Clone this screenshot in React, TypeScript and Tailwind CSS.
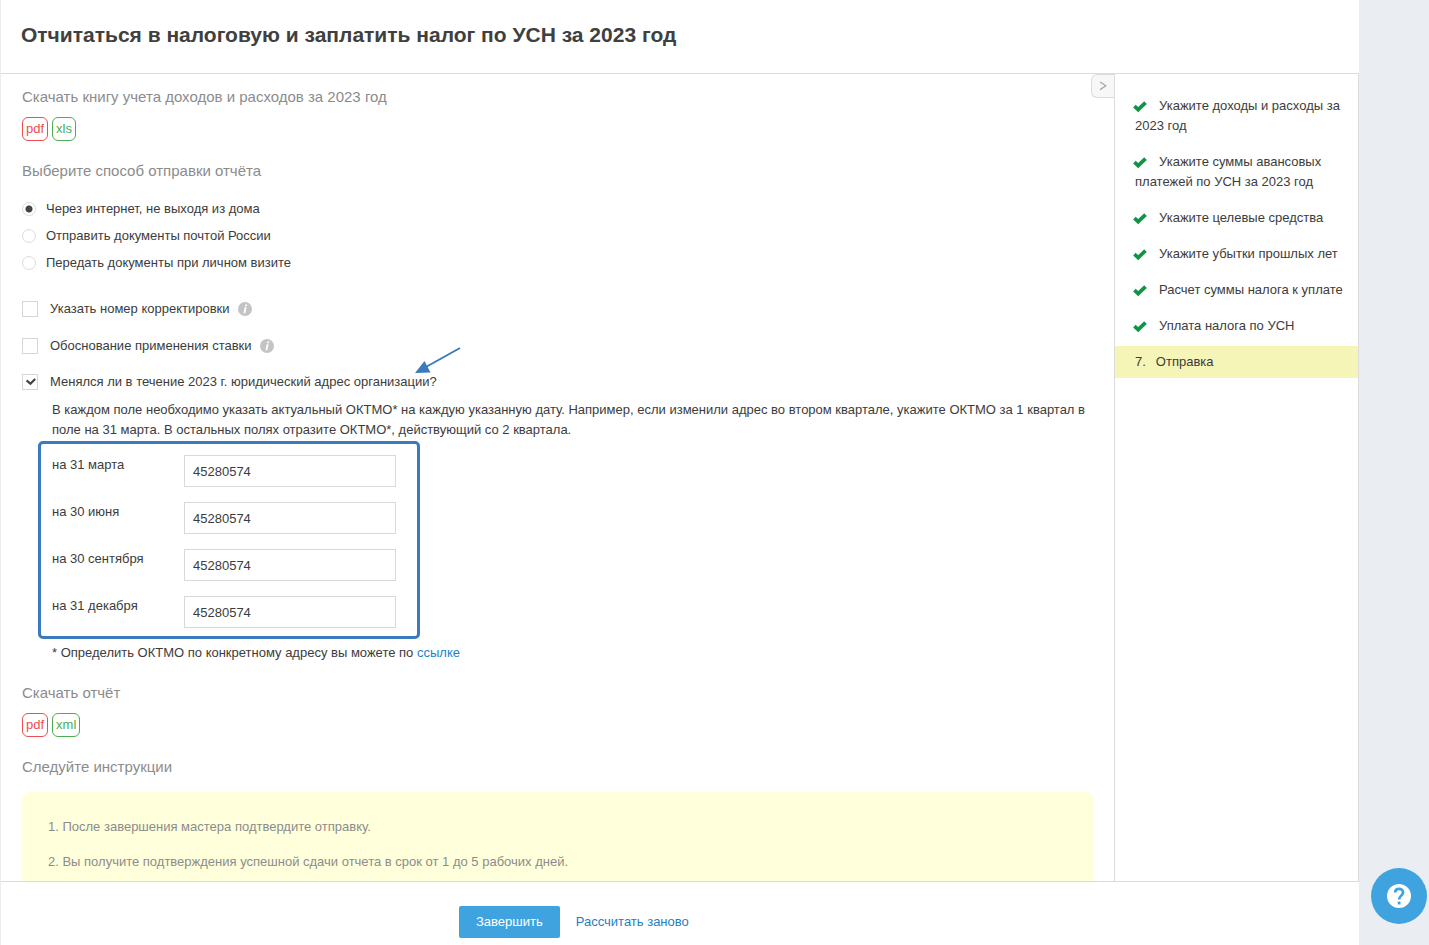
import { useState } from 'react';

type BadgeProps = {
  label: string;
  tone: 'red' | 'green';
};

const DELIVERY = [
  { id: 'online', label: 'Через интернет, не выходя из дома' },
  { id: 'post', label: 'Отправить документы почтой России' },
  { id: 'visit', label: 'Передать документы при личном визите' },
];

const DATES = [
  { id: 'q1', label: 'на 31 марта' },
  { id: 'q2', label: 'на 30 июня' },
  { id: 'q3', label: 'на 30 сентября' },
  { id: 'q4', label: 'на 31 декабря' },
];

const DONE_STEPS = [
  'Укажите доходы и расходы за 2023 год',
  'Укажите суммы авансовых платежей по УСН за 2023 год',
  'Укажите целевые средства',
  'Укажите убытки прошлых лет',
  'Расчет суммы налога к уплате',
  'Уплата налога по УСН',
];

function FileBadge({ label, tone }: BadgeProps) {
  const color = tone === 'red' ? 'border-[#ee4d55] text-[#ee4d55]' : 'border-[#4cae50] text-[#4cae50]';
  return (
    <a href="#" className={`flex h-6 items-center rounded-md border px-[3px] leading-5 ${color}`}>
      {label}
    </a>
  );
}

function SectionTitle({ children }: { children: string }) {
  return <h2 className="text-[15px] leading-5 text-[#8c8c8c]">{children}</h2>;
}

function InfoIcon() {
  return (
    <svg viewBox="0 0 14 14" className="mb-px ml-2 size-[14px]" aria-hidden="true">
      <circle cx="7" cy="7" r="7" fill="#c4c4c4" />
      <path d="M7.3 2.6h1.9l-.4 1.7H6.9zM6.7 5.2h1.9L7.3 11.2H5.4z" fill="#fff" />
    </svg>
  );
}

function StepCheck() {
  return (
    <svg viewBox="0 0 14 14" className="mr-3 -ml-0.5 inline-block size-[14px]" aria-hidden="true">
      <path d="M1.4 6.2 5.2 9.7 12.5 2.6" fill="none" stroke="#109547" strokeWidth="3.7" />
    </svg>
  );
}

type CheckRowProps = {
  id: string;
  label: string;
  info?: boolean;
  defaultChecked?: boolean;
};

function CheckRow({ id, label, info, defaultChecked }: CheckRowProps) {
  return (
    <div className="flex h-5 items-center">
      <span className="relative mr-3 size-4">
        <input
          id={id}
          type="checkbox"
          defaultChecked={defaultChecked}
          className="peer block size-4 appearance-none border border-[#d6d6d6] bg-white"
        />
        <svg
          viewBox="0 0 16 16"
          className="pointer-events-none absolute inset-0 hidden size-4 peer-checked:block"
          aria-hidden="true"
        >
          <path d="M4.6 6.4 8.4 9.8 13.2 5" fill="none" stroke="#444" strokeWidth="2.2" />
        </svg>
      </span>
      <label htmlFor={id}>{label}</label>
      {info && <InfoIcon />}
    </div>
  );
}

export default function App() {
  const [delivery, setDelivery] = useState('online');
  const [codes, setCodes] = useState<Record<string, string>>({
    q1: '45280574',
    q2: '45280574',
    q3: '45280574',
    q4: '45280574',
  });

  return (
    <div className="h-screen bg-[#eaeef2] pr-[70px] pl-px font-['Liberation_Sans',Arial,sans-serif] text-[13px] leading-5 text-[#3c3c3c]">
      <div className="flex h-full flex-col bg-white">
        <header className="border-b border-[#dcdcdc] px-5 pt-[21px] pb-6">
          <h1 className="text-[21px] leading-7 font-bold text-[#404040]">
            Отчитаться в налоговую и заплатить налог по УСН за 2023 год
          </h1>
        </header>

        <div className="flex min-h-0 flex-1">
          <main className="relative min-w-0 flex-1 overflow-hidden pt-[13px] pr-5 pl-[21px]">
            <button
              type="button"
              aria-label="Свернуть"
              className="absolute top-0 right-0 flex h-6 w-[23px] items-center justify-center rounded-l-md border border-r-0 border-[#dcdcdc] bg-[#f7f7f7]"
            >
              <svg viewBox="0 0 8 10" className="h-[10px] w-2" aria-hidden="true">
                <path d="M1 1 6.8 4.8 1 8.6" fill="none" stroke="#a8a8a8" strokeWidth="1.3" />
              </svg>
            </button>

            <SectionTitle>Скачать книгу учета доходов и расходов за 2023 год</SectionTitle>
            <div className="mt-[10px] mb-5 flex gap-1">
              <FileBadge label="pdf" tone="red" />
              <FileBadge label="xls" tone="green" />
            </div>

            <SectionTitle>Выберите способ отправки отчёта</SectionTitle>
            <div className="mt-[18px] flex flex-col gap-[7px]">
              {DELIVERY.map(({ id, label }) => (
                <div key={id} className="flex items-center">
                  <input
                    id={id}
                    type="radio"
                    name="delivery"
                    checked={delivery === id}
                    onChange={() => setDelivery(id)}
                    className="mr-[10px] size-[14px] appearance-none rounded-full border border-[#dcdcdc] bg-white checked:bg-[radial-gradient(circle,#444_0_3px,transparent_4px)]"
                  />
                  <label htmlFor={id}>{label}</label>
                </div>
              ))}
            </div>

            <div className="mt-[26px] flex flex-col gap-[17px]">
              <CheckRow id="correction" label="Указать номер корректировки" info />
              <CheckRow id="rate" label="Обоснование применения ставки" info />
            </div>

            <div className="relative mt-4">
              <CheckRow
                id="address"
                label="Менялся ли в течение 2023 г. юридический адрес организации?"
                defaultChecked
              />
              {/* Pointer to the address question */}
              <svg
                viewBox="0 0 46 28"
                className="pointer-events-none absolute -top-[25px] left-[393px] h-7 w-[46px]"
                aria-hidden="true"
              >
                <path d="M45 1 10 20.5" stroke="#3a7abd" strokeWidth="2" />
                <path d="M0 26 9.5 14 15.5 25.5z" fill="#3a7abd" />
              </svg>
            </div>

            <p className="mt-2 ml-[30px]">
              В каждом поле необходимо указать актуальный ОКТМО* на каждую указанную дату. Например, если изменили
              адрес во втором квартале, укажите ОКТМО за 1 квартал в поле на 31 марта. В остальных полях отразите
              ОКТМО*, действующий со 2 квартала.
            </p>

            <div className="mt-px ml-4 flex w-fit flex-col gap-[15px] rounded-[5px] border-3 border-[#3a7abd] pt-[11px] pr-[21px] pb-2 pl-[11px]">
              {DATES.map(({ id, label }) => (
                <div key={id} className="flex items-start">
                  <label htmlFor={id} className="w-[132px]">
                    {label}
                  </label>
                  <input
                    id={id}
                    type="text"
                    value={codes[id]}
                    onChange={(e) => setCodes({ ...codes, [id]: e.target.value })}
                    className="h-8 w-[212px] border border-[#d9d9d9] px-2"
                  />
                </div>
              ))}
            </div>

            <p className="mt-1 mb-5 ml-[30px]">
              * Определить ОКТМО по конкретному адресу вы можете по{' '}
              <a href="#" className="text-[#1d81c4]">
                ссылке
              </a>
            </p>

            <SectionTitle>Скачать отчёт</SectionTitle>
            <div className="mt-[10px] mb-5 flex gap-1">
              <FileBadge label="pdf" tone="red" />
              <FileBadge label="xml" tone="green" />
            </div>

            <SectionTitle>Следуйте инструкции</SectionTitle>
            <ol className="mt-[15px] flex flex-col gap-[15px] rounded-lg bg-[#ffffdb] px-[26px] py-[25px] text-[#8c8c8c]">
              <li>1. После завершения мастера подтвердите отправку.</li>
              <li>2. Вы получите подтверждения успешной сдачи отчета в срок от 1 до 5 рабочих дней.</li>
            </ol>
          </main>

          <aside className="w-[245px] shrink-0 border-x border-[#dcdcdc] pt-4">
            <ol className="flex flex-col gap-1">
              {DONE_STEPS.map((step) => (
                <li key={step} className="py-[6px] pr-[15px] pl-5">
                  <StepCheck />
                  {step}
                </li>
              ))}
              <li className="flex gap-[10px] bg-[#f5f5b8] py-[6px] pl-5">
                <span>7.</span>
                <span>Отправка</span>
              </li>
            </ol>
          </aside>
        </div>

        <footer className="flex items-center gap-4 border-t border-[#dcdcdc] pt-6 pb-[7px] pl-[458px]">
          <button type="button" className="h-8 rounded-xs bg-[#3fa3df] px-[17px] text-white">
            Завершить
          </button>
          <a href="#" className="text-[#1d81c4]">
            Рассчитать заново
          </a>
        </footer>
      </div>

      <button
        type="button"
        aria-label="Помощь"
        className="fixed right-[2px] bottom-[21px] flex size-14 items-center justify-center rounded-full bg-[#3fa3df]"
      >
        <svg viewBox="0 0 24 24" className="size-6" aria-hidden="true">
          <circle cx="12" cy="12" r="12" fill="#fff" />
          <path
            d="M8.2 8.6C8.2 6.2 9.8 4.9 12 4.9s4 1.4 4 3.6c0 3-3.9 3.4-3.9 7.1"
            fill="none"
            stroke="#3fa3df"
            strokeWidth="2.7"
          />
          <path d="M10.7 17.6h2.8v2.8h-2.8z" fill="#3fa3df" />
        </svg>
      </button>
    </div>
  );
}
